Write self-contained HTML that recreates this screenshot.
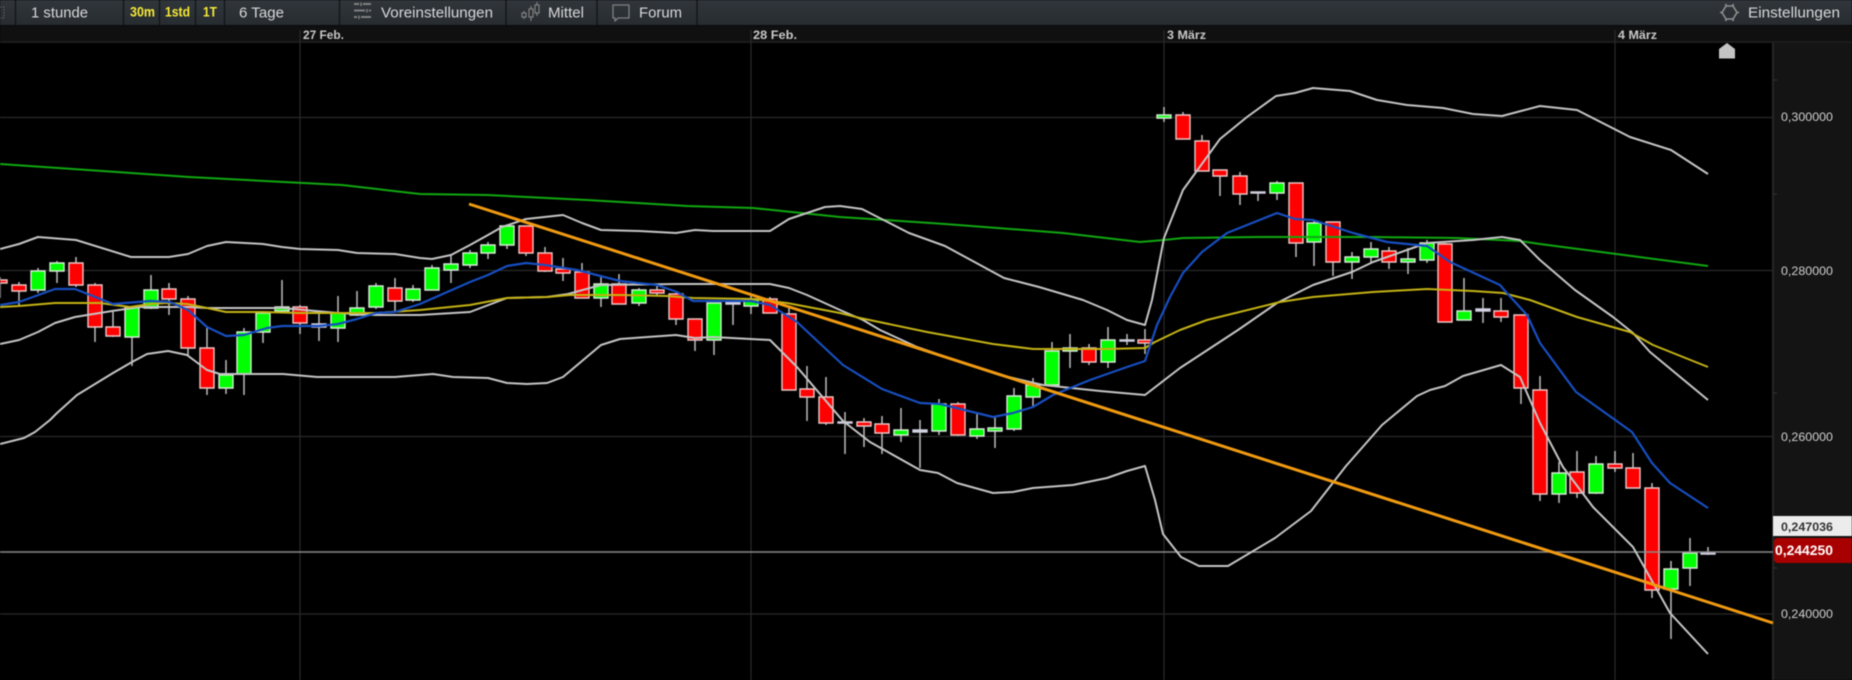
<!DOCTYPE html>
<html><head><meta charset="utf-8"><title>Chart</title>
<style>
html,body{margin:0;padding:0;background:#000;width:1852px;height:680px;overflow:hidden}
svg{display:block;filter:blur(0.45px)}
text{font-family:"Liberation Sans",sans-serif}
</style></head><body>
<svg width="1852" height="680" viewBox="0 0 1852 680" xmlns="http://www.w3.org/2000/svg">
<defs><linearGradient id="tb" x1="0" y1="0" x2="0" y2="1"><stop offset="0" stop-color="#30363b"/><stop offset="1" stop-color="#272c30"/></linearGradient></defs>
<rect width="1852" height="680" fill="#000"/>
<!-- date strip and axis -->
<rect x="0" y="26" width="1852" height="16" fill="#101010"/>
<rect x="0" y="41" width="1852" height="2" fill="#1c1c1c"/>
<rect x="1773" y="43" width="79" height="637" fill="#141414"/>
<rect x="1772" y="43" width="2" height="637" fill="#262626"/>
<!-- grid -->
<path d="M0 117.5H1773M0 270.5H1773M0 436.5H1773M0 614H1773" stroke="#282828" stroke-width="1.2" fill="none"/>
<path d="M300 30V680M751 30V680M1164 30V680M1615 30V680" stroke="#2a2a2a" stroke-width="1.2" fill="none"/>
<path d="M1773 80h4M1773 194h4M1773 393h4M1773 568h4" stroke="#333" stroke-width="1"/>
<!-- wicks -->
<path fill="none" stroke="#bcbcbc" stroke-width="1.5" d="M0 277V298M19 282V306M38 268V293M57 261V283M76 257V287M95 283V342M113 312V337M132 306V366M151 275V309M169 283V315M188 296V355M207 328V395M226 360V394M244 328V395M263 313V343M282 280V312M300 305V334M319 313V341M338 296V342M357 291V316M376 283V309M395 278V311M413 285V302M432 265V290M451 255V283M470 250V268M488 242V259M507 226V249M526 226V256M545 247V272M563 258V281M582 263V298M601 275V307M619 274V304M639 288V306M657 284V295M676 293V325M695 319V351M714 303V355M733 302V325M751 296V314M770 297V313M789 307V390M807 366V421M826 377V425M845 412V454M864 418V447M882 416V454M901 408V442M920 420V468M939 399V435M958 402V436M977 412V439M995 417V448M1014 388V431M1033 378V407M1052 342V385M1070 334V368M1089 344V365M1108 327V368M1127 334V345M1145 329V354M1164 107V122M1183 112V139M1202 135V171M1220 170V196M1240 172V205M1258 192V201M1277 181V200M1296 183V257M1314 221V266M1333 222V276M1352 252V279M1371 242V263M1389 247V269M1408 248V274M1427 240V263M1445 243V322M1464 278V320M1483 298V323M1501 298V322M1521 315V404M1540 376V501M1559 462V503M1577 451V498M1596 456V494M1615 451V472M1633 453V488M1652 483V598M1671 561V639M1690 538V586M1708 547V555"/>
<!-- red bodies -->
<path fill="#ff0000" stroke="#eec6c6" stroke-width="1.4" d="M-7 280h14V283h-14zM12 285h14V291h-14zM69 263h14V285h-14zM88 285h14V327h-14zM106 327h14V336h-14zM162 289h14V299h-14zM181 299h14V348h-14zM200 348h14V388h-14zM293 307h14V323h-14zM388 288h14V301h-14zM519 226h14V253h-14zM538 253h14V271h-14zM556 269h14V273h-14zM575 272h14V298h-14zM612 284h14V304h-14zM650 290h14V293h-14zM669 294h14V319h-14zM688 319h14V340h-14zM763 299h14V313h-14zM782 314h14V390h-14zM800 389h14V397h-14zM819 397h14V423h-14zM857 422h14V426h-14zM875 424h14V433h-14zM951 404h14V435h-14zM1082 348h14V362h-14zM1138 340h14V343h-14zM1176 115h14V139h-14zM1195 141h14V171h-14zM1213 170h14V176h-14zM1233 176h14V194h-14zM1289 183h14V243h-14zM1326 222h14V262h-14zM1382 251h14V262h-14zM1438 244h14V322h-14zM1494 311h14V317h-14zM1514 315h14V388h-14zM1533 390h14V494h-14zM1570 472h14V493h-14zM1608 464h14V468h-14zM1626 468h14V488h-14zM1645 488h14V590h-14z"/>
<!-- green bodies -->
<path fill="#00ff00" stroke="#d6ecd6" stroke-width="1.4" d="M31 271h14V290h-14zM50 263h14V271h-14zM125 307h14V337h-14zM144 290h14V308h-14zM219 375h14V388h-14zM237 332h14V374h-14zM256 313h14V332h-14zM275 307h14V311h-14zM331 313h14V328h-14zM350 308h14V315h-14zM369 286h14V307h-14zM406 289h14V300h-14zM425 268h14V290h-14zM444 264h14V270h-14zM463 253h14V265h-14zM481 245h14V253h-14zM500 226h14V245h-14zM594 284h14V298h-14zM632 290h14V303h-14zM707 303h14V340h-14zM744 299h14V306h-14zM894 430h14V435h-14zM932 404h14V431h-14zM970 429h14V436h-14zM988 428h14V431h-14zM1007 396h14V429h-14zM1026 385h14V397h-14zM1045 351h14V385h-14zM1063 348h14V351h-14zM1101 340h14V362h-14zM1157 115h14V118h-14zM1270 183h14V193h-14zM1307 223h14V242h-14zM1345 257h14V262h-14zM1364 249h14V257h-14zM1401 259h14V262h-14zM1420 243h14V260h-14zM1457 311h14V320h-14zM1552 473h14V494h-14zM1589 464h14V493h-14zM1664 569h14V589h-14zM1683 553h14V568h-14z"/>
<!-- white dojis -->
<path fill="#d8d8e8" stroke="#cfcfe0" stroke-width="1.4" d="M312 324h14V327h-14zM726 302h14V304h-14zM838 422h14V423h-14zM913 430h14V432h-14zM1120 340h14V341h-14zM1251 192h14V193h-14zM1476 309h14V311h-14zM1701 553h14V554h-14z"/>
<!-- price line -->
<path d="M0 552H1773" stroke="#8a8a8a" stroke-width="1.4"/>
<!-- green MA -->
<polyline fill="none" stroke="#10a810" stroke-width="2" points="0,164 189,177 342,185 420,194 487,195 587,200 687,206 753,208 840,217 945,224 1063,233 1140,242 1164,240 1183,238 1257,237 1373,237 1457,238 1520,241 1540,244 1708,266"/>
<!-- white bands -->
<g fill="none" stroke="#c4c4c4" stroke-width="2" stroke-linejoin="round">
<polyline points="0,249 19,244 38,237 76,240 131,257 169,257 188,254 207,246 226,242 263,244 282,247 300,249 338,250 357,253 395,254 420,258 432,259 451,255 470,245 488,235 502,227 526,219 563,215 582,223 601,230 639,231 676,233 695,230 713,231 770,231 789,219 807,213 825,207 840,206 862,209 909,233 945,246 1004,278 1039,287 1083,300 1107,310 1127,320 1145,325 1152,300 1164,238 1183,190 1220,139 1247,117 1276,96 1295,93 1313,88 1350,91 1377,100 1407,105 1443,108 1473,114 1502,116 1540,106 1577,110 1630,137 1671,150 1708,174"/>
<polyline points="0,344 19,340 38,332 55,323 75,317 112,311 140,307 188,307 207,308 226,308 263,308 282,308 338,313 376,315 420,315 470,312 507,298 547,297 568,294 601,285 676,284 770,284 789,288 807,295 840,310 863,320 880,330 917,347 960,362 1000,375 1043,385 1100,391 1145,395 1180,368 1238,330 1277,303 1313,285 1352,272 1373,262 1407,250 1427,243 1473,240 1502,237 1520,240 1540,260 1575,290 1613,317 1633,333 1650,352 1708,400"/>
<polyline points="0,444 24,438 35,432 50,420 57,413 77,395 113,373 132,362 147,354 168,351 187,355 207,370 220,374 244,374 283,374 317,377 395,377 420,375 433,374 453,377 488,378 507,383 527,384 547,383 563,377 601,345 620,339 676,335 695,338 713,337 770,340 797,367 843,421 870,442 920,470 938,473 957,483 993,493 1013,492 1033,488 1073,485 1107,478 1127,471 1145,466 1155,500 1163,534 1181,557 1199,566 1228,566 1275,538 1311,511 1346,466 1382,425 1417,396 1430,390 1445,386 1463,376 1501,365 1520,377 1540,423 1563,467 1593,507 1633,547 1670,613 1708,654"/>
</g>
<!-- yellow MA -->
<polyline fill="none" stroke="#c4b214" stroke-width="2" stroke-linejoin="round" points="0,307 19,306 55,303 100,303 130,307 150,304 167,303 187,304 207,308 226,312 263,312 300,313 338,313 376,313 420,310 470,305 507,298 547,297 570,295 620,295 667,296 693,298 753,299 787,303 840,313 860,318 927,332 993,344 1033,349 1107,349 1145,348 1155,342 1180,330 1207,320 1280,302 1313,297 1373,292 1427,289 1473,291 1503,293 1530,300 1577,317 1630,332 1653,345 1708,367"/>
<!-- blue MA -->
<polyline fill="none" stroke="#174ec0" stroke-width="2.2" stroke-linejoin="round" points="0,305 19,302 55,289 75,289 113,304 150,301 170,302 188,310 207,327 226,336 244,335 267,328 282,326 319,326 338,324 357,319 376,313 395,312 420,304 470,282 488,275 507,266 526,263 545,265 577,270 620,281 657,285 677,292 693,301 751,301 770,305 797,322 843,365 882,389 920,403 940,404 993,417 1013,413 1033,407 1053,395 1090,380 1127,367 1145,361 1152,340 1157,325 1170,297 1183,273 1202,252 1227,233 1277,213 1295,219 1313,220 1353,233 1387,242 1427,246 1450,262 1500,285 1506,292 1527,315 1540,343 1576,392 1632,432 1652,463 1670,483 1708,508"/>
<!-- orange trend -->
<path d="M469 204L1773 623" stroke="#f09a10" stroke-width="3" fill="none"/>
<!-- marker -->
<path d="M1727 43L1735 49V58.5H1719V49Z" fill="#c4c4c4"/>
<!-- toolbar -->
<rect x="0" y="0" width="1852" height="25" fill="url(#tb)"/>
<rect x="0" y="25" width="1852" height="1" fill="#0a0a0a"/>
<path d="M15.5 0V25M123.5 0V25M159.5 0V25M195.5 0V25M224.5 0V25M339.5 0V25M506 0V25M597 0V25M697 0V25" stroke="#111416" stroke-width="1.3"/>
<path d="M0 7h4v11h-4" fill="none" stroke="#666" stroke-width="1" stroke-dasharray="1.5 1.5"/>
<g fill="#d8d8d8" font-size="15">
<text x="31" y="17.5" textLength="57" lengthAdjust="spacingAndGlyphs">1 stunde</text>
<text x="239" y="17.5" textLength="45" lengthAdjust="spacingAndGlyphs">6 Tage</text>
<text x="381" y="17.5" textLength="112" lengthAdjust="spacingAndGlyphs">Voreinstellungen</text>
<text x="548" y="17.5" textLength="36" lengthAdjust="spacingAndGlyphs">Mittel</text>
<text x="639" y="17.5" textLength="43" lengthAdjust="spacingAndGlyphs">Forum</text>
<text x="1748" y="17.5" textLength="92" lengthAdjust="spacingAndGlyphs">Einstellungen</text>
</g>
<g fill="#f6ea38" font-size="13.5" font-weight="bold">
<text x="130" y="16.5" textLength="25" lengthAdjust="spacingAndGlyphs">30m</text>
<text x="165" y="16.5" textLength="25" lengthAdjust="spacingAndGlyphs">1std</text>
<text x="203" y="16.5" textLength="14" lengthAdjust="spacingAndGlyphs">1T</text>
</g>
<!-- sliders icon -->
<g fill="none" stroke="#808080" stroke-width="2">
<path d="M354 4h5M363 4h8M354 10.500h11M369 10.500h2M354 17h3M361 17h10"/>
<path d="M361 2.500v3.500M367 9v3.500M359 15.500v3.500" stroke-width="1.500"/>
</g>
<!-- candles icon -->
<g fill="none" stroke="#808080" stroke-width="1.200">
<path d="M524 11v8M531 6v15M537 2v14"/>
<rect x="522" y="13" width="4" height="4" fill="#2b3035"/>
<rect x="529" y="9" width="4" height="8" fill="#2b3035"/>
<rect x="535" y="5" width="4" height="8" fill="#2b3035"/>
</g>
<!-- bubble icon -->
<path d="M613 5h16v13h-11l-3 3v-3h-2z" fill="none" stroke="#808080" stroke-width="1.300" stroke-linejoin="round"/>
<!-- settings icon -->
<g fill="none" stroke="#909090" stroke-width="1.600">
<path d="M1726 6h7l4 6.500l-4 6.500h-7l-4-6.500z"/>
<path d="M1725.500 4l1 2M1733.500 4l-1 2M1725.500 21l1-2M1733.500 21l-1-2M1720 12.500h2M1737 12.500h2"/>
</g>
<!-- dates -->
<g fill="#c8c8c8" font-size="11.5" font-weight="bold">
<text x="303" y="39" textLength="41" lengthAdjust="spacingAndGlyphs">27 Feb.</text>
<text x="753" y="39" textLength="44" lengthAdjust="spacingAndGlyphs">28 Feb.</text>
<text x="1167" y="39" textLength="39" lengthAdjust="spacingAndGlyphs">3 März</text>
<text x="1618" y="39" textLength="39" lengthAdjust="spacingAndGlyphs">4 März</text>
</g>
<!-- axis labels -->
<g fill="#d0d0d0" font-size="12">
<text x="1781" y="121" textLength="52" lengthAdjust="spacingAndGlyphs">0,300000</text>
<text x="1781" y="275" textLength="52" lengthAdjust="spacingAndGlyphs">0,280000</text>
<text x="1781" y="441" textLength="52" lengthAdjust="spacingAndGlyphs">0,260000</text>
<text x="1781" y="618" textLength="52" lengthAdjust="spacingAndGlyphs">0,240000</text>
</g>
<rect x="1773" y="516" width="79" height="20" fill="#ececec"/>
<text x="1781" y="531" font-size="12" font-weight="bold" fill="#333" textLength="52" lengthAdjust="spacingAndGlyphs">0,247036</text>
<path d="M1778 538H1852V563H1778Q1774 563 1774 559V542Q1774 538 1778 538Z" fill="#a80000"/>
<text x="1775" y="555" font-size="14" font-weight="bold" fill="#fff" textLength="58" lengthAdjust="spacingAndGlyphs">0,244250</text>
</svg>
</body></html>
